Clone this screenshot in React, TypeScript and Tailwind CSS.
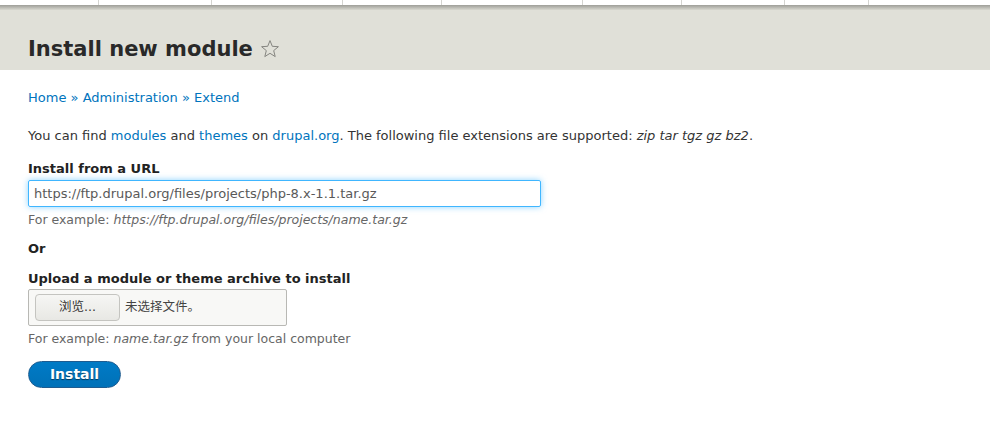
export default function App() {
  const tabs = [99, 113, 131, 99, 141, 99, 103, 84];

  return (
    <div className="min-h-[445px] bg-white text-[13px] text-[#333] font-['DejaVu_Sans','Noto_Sans_CJK_SC',sans-serif]">
      {/* toolbar remnant */}
      <div className="flex h-[5px] bg-white">
        {tabs.map((w, i) => (
          <div key={i} className="h-full border-r border-[#d4d4d0]" style={{ width: w }} />
        ))}
      </div>
      <div className="h-[5px] bg-gradient-to-b from-[#9e9e98] to-[#d8d8d0]" />

      <header className="flex h-[60px] items-center bg-[#e0e0d8] px-7 pt-[19px]">
        <h1 className="text-[21px] font-bold leading-none text-[#292929]">Install new module</h1>
        <svg width="20" height="20" viewBox="0 0 20 20" className="ml-[7px] mt-[-2px]">
          <path
            d="M10 1.6 L12.3 7.3 L18.4 7.7 L13.7 11.6 L15.2 17.6 L10 14.3 L4.8 17.6 L6.3 11.6 L1.6 7.7 L7.7 7.3 Z"
            fill="none"
            stroke="#858580"
            strokeWidth="1"
            strokeLinejoin="round"
          />
        </svg>
      </header>

      <main className="px-7">
        <nav className="mt-[18px] text-[#0074bd]">
          <a>Home</a> <span>»</span> <a>Administration</a> <span>»</span> <a>Extend</a>
        </nav>

        <p className="mt-[18px]">
          You can find <a className="text-[#0074bd]">modules</a> and <a className="text-[#0074bd]">themes</a> on{' '}
          <a className="text-[#0074bd]">drupal.org</a>. The following file extensions are supported:{' '}
          <em>zip tar tgz gz bz2</em>.
        </p>

        <div className="mt-[14px]">
          <label className="block font-bold text-[#222]">Install from a URL</label>
          <input
            type="text"
            defaultValue="https://ftp.drupal.org/files/projects/php-8.x-1.1.tar.gz"
            className="mt-[1px] block h-[27px] w-[513px] rounded-[2px] border border-[#40b6ff] px-[5px] text-[13px] text-[#595959] shadow-[0_0_6px_rgba(64,182,255,0.6)] outline-none"
          />
          <div className="mt-[4px] text-[12.5px] text-[#666]">
            For example: <em>https://ftp.drupal.org/files/projects/name.tar.gz</em>
          </div>
        </div>

        <div className="mt-[10px] font-bold text-[#222]">Or</div>

        <div className="mt-[10px]">
          <label className="block font-bold text-[#222]">Upload a module or theme archive to install</label>
          <div className="mt-[1px] flex h-[37px] w-[259px] items-center rounded-[2px] border border-[#b8b8b4] bg-[#f8f8f6] pl-[6px]">
            <button className="h-[27px] w-[85px] rounded-[4px] border border-[#c4c4c0] bg-gradient-to-b from-[#f6f6f4] to-[#e8e8e4] text-[12.5px] text-[#333]">
              浏览...
            </button>
            <span className="ml-[5px] text-[12.5px] text-[#444]">未选择文件。</span>
          </div>
          <div className="mt-[4px] text-[12.5px] text-[#666]">
            For example: <em>name.tar.gz</em> from your local computer
          </div>
        </div>

        <button className="mt-[12px] h-[27px] w-[93px] rounded-full border border-[#1e5c90] bg-gradient-to-b from-[#007bc6] to-[#0071b8] text-[14px] font-bold text-white [text-shadow:0_1px_1px_rgba(0,0,0,0.5)]">
          Install
        </button>
      </main>
    </div>
  );
}
